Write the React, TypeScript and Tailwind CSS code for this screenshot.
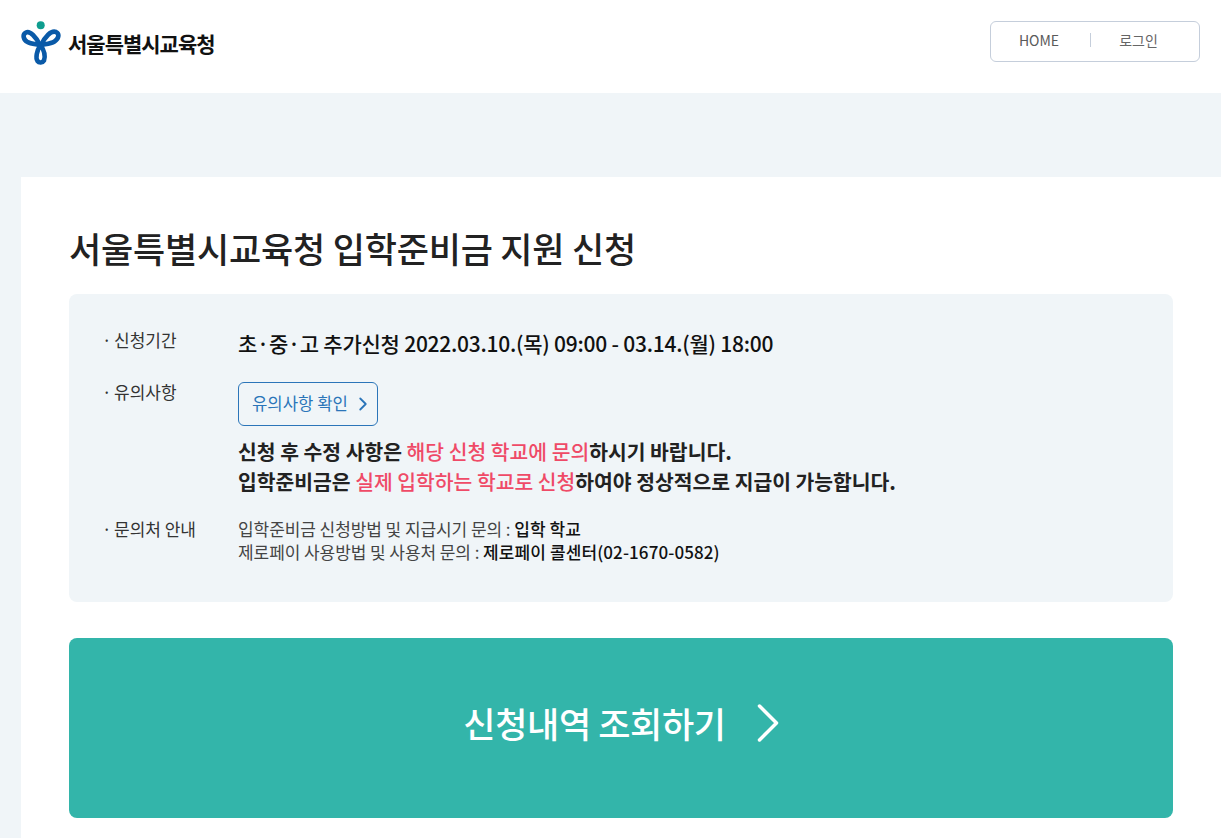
import { ChevronRight } from 'lucide-react'

const font = { fontFamily: '"Noto Sans CJK KR", "Noto Sans", sans-serif' }

function Logo() {
    return <svg width="40" height="44" viewBox="0 0 40 44" fill="none">
        <circle cx="19.7" cy="4.3" r="4" fill="#0f9d8f" />
        <g stroke="#0a5aa8" strokeWidth="4.6" strokeLinejoin="round">
            <path d="M19 24 C15 16 9 9.5 5 11.5 C1 13.5 2.5 19 6.5 21 C10 23 15 23 19 24 Z" />
            <path d="M20 24 C24 16 30 9 35 11 C39 13 37.5 18 33.5 20.5 C29.5 23 24 23 20 24 Z" />
            <path d="M19.5 24 C15.5 30 14.5 37 16.5 40 C18 42 21.5 42 23 39.5 C24.5 35 23 29 19.5 24 Z" />
        </g>
    </svg>
}

function Row({ label, className, labelClass, children }: { label: string, className?: string, labelClass?: string, children?: any }) {
    return <div className={ `flex ${className || ''}` }>
        <div className={ `w-[169px] shrink-0 pl-[33px] text-[17px] leading-[26px] text-[#333] flex ${labelClass || ''}` }>
            <span className="w-[12px]">·</span>{ label }
        </div>
        <div className="grow">{ children }</div>
    </div>
}

export default function App() {
    return <div className="h-screen overflow-hidden bg-[#f0f5f8] text-[#111]" style={ font }>
        <header className="h-[93px] bg-white flex items-center justify-between pl-[21px] pr-[21px]">
            <div className="flex items-center gap-[7px] -mt-[7px]">
                <Logo />
                <span className="text-[21px] font-bold tracking-[-1px] text-[#111] leading-none">서울특별시교육청</span>
            </div>
            <nav className="w-[210px] h-[41px] border border-[#c5cedb] rounded-[6px] flex items-center text-[14px] text-[#555] -mt-[11px]">
                <a className="w-[100px] text-center border-r border-[#c5cedb] leading-[14px] text-[#5a5a5a] -translate-y-px pr-[3px]">HOME</a>
                <a className="w-[95px] text-center leading-[14px] text-[#666] -translate-y-px">로그인</a>
            </nav>
        </header>
        <main className="mt-[84px] ml-[21px] bg-white px-[48px] pt-[48px] h-[700px]">
            <h1 className="text-[35px] font-medium leading-[46px] tracking-[-0.2px] text-[#222]">서울특별시교육청 입학준비금 지원 신청</h1>
            <section className="mt-[23px] h-[308px] bg-[#f0f5f8] rounded-[8px] pt-[33px]">
                <Row label="신청기간">
                    <p className="text-[21px] font-medium leading-[30px] tracking-[-0.24px] translate-y-px">초·중·고 추가신청 2022.03.10.(목) 09:00 - 03.14.(월) 18:00</p>
                </Row>
                <Row label="유의사항" className="mt-[25px]" labelClass="-translate-y-[3px]">
                    <button className="w-[140px] h-[44px] border border-[#2b75b9] rounded-[6px] text-[16.7px] text-[#2b75b9] flex items-center gap-[4px] pl-[13px]">
                        유의사항 확인 <ChevronRight size={ 22 } strokeWidth={ 2 } />
                    </button>
                    <p className="mt-[10px] text-[20.4px] font-bold leading-[30px] text-[#222]">
                        신청 후 수정 사항은 <span className="text-[#ef4a67] font-medium">해당 신청 학교에 문의</span>하시기 바랍니다.<br />
                        입학준비금은 <span className="text-[#ef4a67] font-medium">실제 입학하는 학교로 신청</span>하여야 정상적으로 지급이 가능합니다.
                    </p>
                </Row>
                <Row label="문의처 안내" className="mt-[20px]">
                    <p className="mt-[1px] text-[17px] leading-[23px] text-[#444] tracking-[-0.07px]">
                        입학준비금 신청방법 및 지급시기 문의 : <b className="font-medium text-[#111] tracking-[0.1px]">입학 학교</b><br />
                        제로페이 사용방법 및 사용처 문의 : <b className="font-medium text-[#111] tracking-[0.1px]">제로페이 콜센터(02-1670-0582)</b>
                    </p>
                </Row>
            </section>
            <button className="mt-[36px] w-full h-[180px] bg-[#33b5aa] rounded-[8px] text-white text-[35px] font-medium tracking-[-0.35px] flex items-center justify-center gap-[31px] pb-[10px] leading-[50px]">
                신청내역 조회하기
                <svg width="22" height="38" viewBox="0 0 22 38" fill="none"><path d="M2.5 2 L19.5 19 L2.5 36" stroke="white" strokeWidth="3.5" strokeLinecap="round" strokeLinejoin="round" /></svg>
            </button>
        </main>
    </div>
}
